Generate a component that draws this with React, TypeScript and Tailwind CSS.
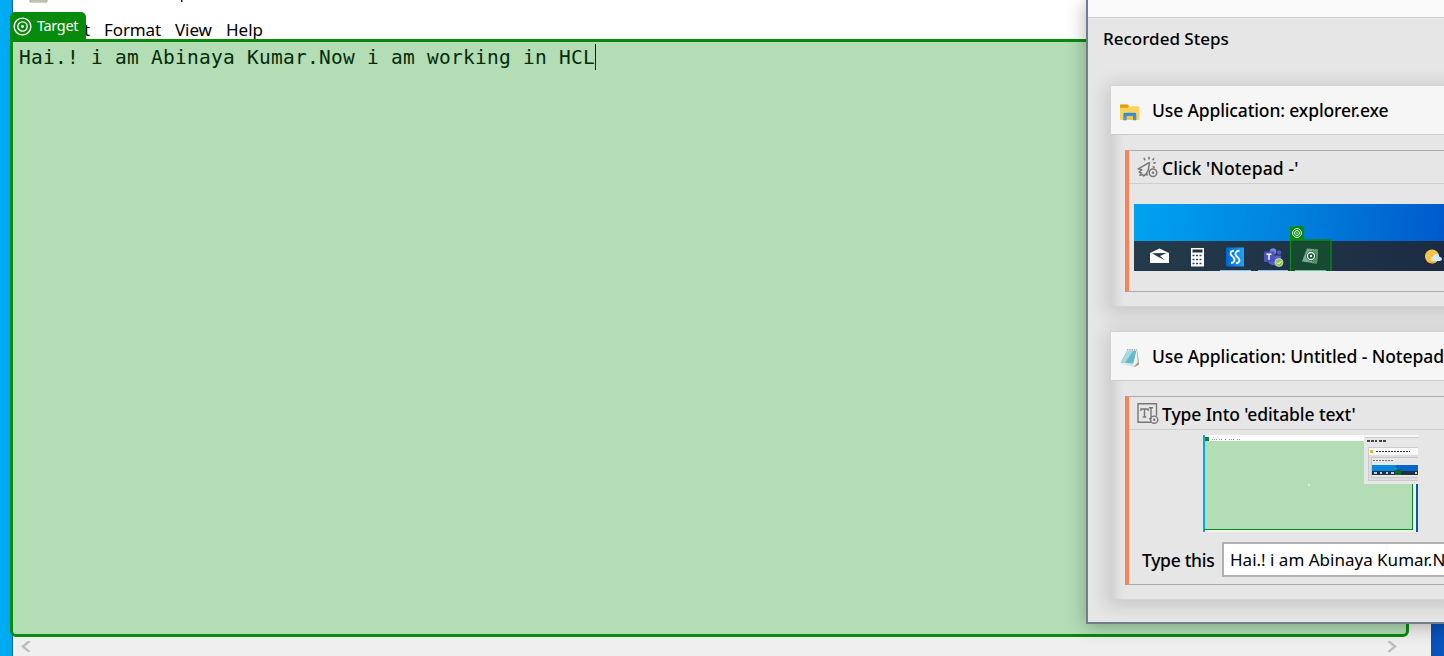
import type { ReactNode } from "react";

const sans = "font-['Noto_Sans','Open_Sans',sans-serif] whitespace-nowrap text-black";

function TargetIcon({ className, stroke = 1.5 }: { className: string; stroke?: number }) {
  return (
    <svg viewBox="0 0 20 20" className={className} fill="none" stroke="white" strokeWidth={stroke}>
      <circle cx="10" cy="10" r="8.8" />
      <circle cx="10" cy="10" r="4.9" />
      <circle cx="10" cy="10" r="1.5" fill="white" stroke="none" />
    </svg>
  );
}

function FolderIcon() {
  return (
    <svg viewBox="0 0 20 17" className="mt-[4px] h-[17px] w-5 shrink-0">
      <path d="M0 1.5Q0 .5 1 .5h6.5L9 2.2h9.500q1 0 1 1V15q0 1-1 1h-17Q0 16 0 15z" fill="#ffd25c" />
      <path d="M1 .5h6.5L9 2 7.500 3.700H0V1.500Q0 .5 1 .5z" fill="#dfa000" />
      <path d="M3.300 16.200v-6q0-1.500 1.500-1.500h10q1.500 0 1.500 1.500v6h-3.500v-4h-6v4z" fill="#4097df" />
      <path d="M4 9h12v2.500H4z" fill="#338bd1" />
      <path d="M6.800 12.200h6V16h-6z" fill="#ffc63b" />
    </svg>
  );
}

function NotepadIcon() {
  return (
    <svg viewBox="0 0 20 20" className="mt-[3px] h-5 w-5 shrink-0">
      <path d="M17.300 2l1.700 14.500-4.500 2.500L12 17z" fill="#aa9270" />
      <path d="M6.700 2.200L17.500 2l-2.700 14.500L0 15.500z" fill="#e3f1f3" />
      <path d="M7 3l9.300-.2-2.800 13L.8 14.500z" fill="#68b8c7" />
      <path d="M7 3l6-.1L5 14.900.8 14.500z" fill="#a6d9e2" />
      <path d="M17 2.500l.8 12-3.800 4-1-2z" fill="#eef2f2" />
      <path d="M0 15.500l11.500 3 3.500-.5-2-2z" fill="#d1e5e8" />
      <path d="M7 1.800h10" stroke="#71858c" strokeDasharray="1.300 1" />
    </svg>
  );
}

function ClickIcon() {
  return (
    <svg viewBox="0 0 21 22" className="h-[22px] w-[21px] shrink-0" fill="none" stroke="#787878" strokeWidth="1.500">
      <path d="M12.500 6.300L1.200 12.800l3.500 1-2.500 2.200 2 .7-1.200 2.500 2.500-.6 1.200 1.300 2.500-2" strokeLinejoin="round" />
      <path d="M12.500 6.300L11.300 14l-2.300 4.500 1.700.8M12 .8v2.700M6.800 2l1.400 2.300M17 2.200l-1.400 2M18.800 6.500l-2.500.8M15.500 10.300l2.300 1.300" />
      <circle cx="16" cy="16.800" r="3.800" />
      <circle cx="16" cy="16.800" r="1.300" fill="#787878" stroke="none" />
    </svg>
  );
}

function TypeIcon() {
  return (
    <svg viewBox="0 0 22 22" className="mt-px h-[22px] w-[22px] shrink-0" fill="none" stroke="#777" strokeWidth="1.400">
      <path d="M14 19.300H1V.8h18.500v12" />
      <path d="M4 8V6h7v2M7.500 6v8M5.800 14h3.500M12 4.700h4M14 4.700v11M12 15.700h2.500" />
      <circle cx="17.200" cy="16.700" r="3.600" />
      <circle cx="17.200" cy="16.700" r="1.200" fill="#777" stroke="none" />
    </svg>
  );
}

function Taskbar() {
  return (
    <svg viewBox="0 0 310 67" className="block h-[67px] w-[310px]">
      <defs>
        <linearGradient id="desk" gradientUnits="userSpaceOnUse" x1="0" y1="0" x2="310" y2="37">
          <stop offset="0" stopColor="#00a3f0" />
          <stop offset=".5" stopColor="#0082de" />
          <stop offset="1" stopColor="#005acb" />
        </linearGradient>
        <linearGradient id="dark">
          <stop offset="0" stopColor="#233b4b" />
          <stop offset="1" stopColor="#1b2c42" />
        </linearGradient>
        <linearGradient id="blueTile">
          <stop offset="0" stopColor="#0065d6" />
          <stop offset="1" stopColor="#20a4f4" />
        </linearGradient>
      </defs>
      <path d="M0 0h310v37H0z" fill="url(#desk)" />
      <path d="M0 37h310v30H0z" fill="url(#dark)" />
      <path d="M86 66.500h31M124 66.500h30" stroke="#83c4f0" />
      <path d="M16 49l9.500-4.500 9.500 4.500v10H16z" fill="#fff" />
      <path d="M18 49.300l14.500-.2-6.500 2.900 5 4.200-7-3.400z" fill="#223848" />
      <path d="M57 44h13v18.500H57z" fill="#fff" />
      <path d="M58.500 45.500h10v3h-10z" fill="#243541" />
      <path d="M58.500 51.500h10M58.500 55.500h10M58.500 59.500h10" stroke="#33434d" strokeWidth="1.700" strokeDasharray="2 1.500" />
      <path d="M92 43.500h18v19H92z" fill="url(#blueTile)" />
      <path d="M100 46.700q-3.500.3-3.500 2.800 0 1.500 1.800 2.800 2.200 1.700 2.200 3.700 0 2.500-3.500 3M102 59.300q3.500-.5 3.500-3 0-1.600-1.700-2.900-2.300-1.600-2.300-3.600 0-2.600 4-3.100" fill="none" stroke="#fff" strokeWidth="1.800" />
      <circle cx="139" cy="47.500" r="3.300" fill="#7b83eb" />
      <circle cx="145" cy="48.500" r="2.200" fill="#5059c9" />
      <path d="M134 51.500h13v4q0 6-5.500 6-6 0-7.500-4z" fill="#5960c5" />
      <rect x="130" y="47.500" width="10.500" height="10.500" rx="1" fill="#4b53bc" />
      <path d="M132.500 50.200h5M135 50.200v5.500" stroke="#fff" strokeWidth="1.500" />
      <circle cx="145" cy="58.500" r="4" fill="#92c353" stroke="#e4efda" strokeWidth=".7" />
      <path d="M143 58.500l1.600 1.600 2.700-3" stroke="#fff" fill="none" />
      <path d="M156.500 36h40.500v32h-40.500z" fill="#174b31" stroke="#078b15" strokeWidth="1.300" />
      <path d="M161 66.500h31" stroke="#6ec29a" />
      <path d="M173 44.500l11 1-1 14-15-2z" fill="#79ac91" />
      <path d="M178 46l6 .5-1 13h-5z" fill="#579071" />
      <g fill="none" stroke="#e7ffed">
        <circle cx="177" cy="52" r="4.500" fill="#124e2c" stroke="#124e2c" strokeWidth=".5" />
        <circle cx="177" cy="52" r="3.500" strokeWidth="1.300" />
        <circle cx="177" cy="52" r="1.200" fill="white" stroke="none" />
      </g>
      <circle cx="298" cy="52.500" r="7" fill="#ffc247" />
      <path d="M293.500 56.800q4 3 8 1" stroke="#ffaa32" strokeWidth="1.500" fill="none" />
      <path d="M297.500 56.500q-1.500-3.500 2-4 .5-3 3.500-2.500 2.500.7 2.500 3 2.500 0 2.500 2 0 1.800-2.500 2h-5.500q-2 0-2.500-.5z" fill="#cdeaff" />
    </svg>
  );
}

function Thumbnail() {
  return (
    <svg viewBox="0 0 215 97" className="h-[97px] w-[215px] shrink-0" shapeRendering="crispEdges">
      <path d="M0 0h215v97H0z" fill="#f2f2f2" />
      <path d="M0 0h162v6H0z" fill="#fff" />
      <path d="M0 0h2v97H0z" fill="#00a8f3" />
      <path d="M2 6h207v88H2z" fill="#b3ddb5" />
      <path d="M209.500 47v47.500H1" stroke="#078b15" fill="none" />
      <path d="M2 2h4v4H2z" fill="#078b15" />
      <path d="M9 4.500h5M16 4.500h3M22 4.500h1M26 4.500h6M34 4.500h4" stroke="#9c9c9c" strokeDasharray="1 1" />
      <path d="M105 49h2v2h-2z" fill="#d8f0d8" />
      <path d="M213 49h2v48h-2z" fill="#0755bd" />
      <path d="M161 0h54v49h-54z" fill="#e7e7e7" />
      <path d="M162 0h53v2h-53z" fill="#fafafa" />
      <path d="M162 2.500h53" stroke="#ccc" />
      <path d="M164 6h10M176 6h7" stroke="#444" strokeWidth="2" strokeDasharray="3 1" />
      <path d="M165 12h50v33h-50z" fill="#ddd" stroke="#ccc" />
      <path d="M166 13h49v7h-49z" fill="#f8f8f8" />
      <path d="M167 15h3v3h-3z" fill="#e9b52b" />
      <path d="M173 16.500h34" stroke="#333" strokeDasharray="2 1" />
      <path d="M168 22h47v20h-47z" fill="#e7e7e7" stroke="#c9c9c9" />
      <path d="M170 25.500h21" stroke="#777" strokeDasharray="2 1" />
      <path d="M169 30h46v6h-46z" fill="#0788df" />
      <path d="M193 30h22v6h-22z" fill="#0765cb" />
      <path d="M169 36h46v4h-46z" fill="#1e3345" />
      <path d="M171 38h3M177 38h2M183 38h2M188 38h3" stroke="#b9cfe5" strokeWidth="2" />
      <path d="M192 35h6v5h-6z" fill="#14652e" />
      <path d="M192 33h2v2h-2z" fill="#21a33d" />
      <path d="M212 37h2v2h-2z" fill="#ffd158" />
    </svg>
  );
}

function Application({ icon, title, children }: { icon: ReactNode; title: ReactNode; children: ReactNode }) {
  return (
    <section className="w-[350px] border border-[#d3d3d3] bg-[#e6e6e6] shadow-[0_3px_18px_3px_rgba(0,0,0,.14)]">
      <header className="flex h-[49px] items-center gap-[12px] border-b border-[#cdcdcd] bg-[#f6f6f6] pl-[9px]">
        {icon}
        {title}
      </header>
      <div className="pt-[15px] pl-[14px] shadow-[inset_14px_0_12px_-10px_rgba(0,0,0,.12)]">{children}</div>
    </section>
  );
}

function Window() {
  return (
    <div className="absolute top-0 left-[12px] flex h-[656px] w-[1419px] flex-col border-l border-[#16658b] bg-white">
      <div className="h-[19px] shrink-0">
        <svg viewBox="0 0 190 5" className="h-[5px] w-[190px]">
          <path d="M17 0h17v2H17z" fill="#dddcd8" stroke="#aaa28c" />
          <path d="M168 0h1.500v2H168z" fill="#222" />
        </svg>
      </div>
      <nav className={`${sans} flex h-[22px] items-center text-[17px]`}>
        <span className="w-[91px] pl-[71px]">t</span>
        <span className="w-[71px] tracking-[-0.1px]">Format</span>
        <span className="w-[51px] tracking-[-0.1px]">View</span>
        <span>Help</span>
      </nav>
      <div className="grow" />
      <div className="flex h-[20px] items-center justify-between bg-[#efefef] pr-[34px] pl-[8px]">
        <svg viewBox="0 0 10 11" className="h-[11px] w-[10px]" fill="none" stroke="#bfbfbf" strokeWidth="2.500">
          <path d="M8.500 0L2 5.500 8.500 11" />
        </svg>
        <svg viewBox="0 0 10 11" className="h-[11px] w-[10px]" fill="none" stroke="#bfbfbf" strokeWidth="2.500">
          <path d="M1.500 0L8 5.500 1.500 11" />
        </svg>
      </div>
    </div>
  );
}

export default function App() {
  return (
    <main className="relative h-[656px] w-[1444px] overflow-hidden bg-[linear-gradient(90deg,#00aef5_0%,#00a5f0_1%,#074fbd_99%,#0856be_100%)]">
      <Window />
      <div className="absolute top-[624px] left-[1400px] h-[32px] w-[31px] bg-[#efefef]" />

      <div className="absolute top-[39px] left-[10px] h-[598px] w-[1399px] rounded-[6px] rounded-tl-none border-[3px] border-[#078b0d] bg-[#b3ddb5] pt-[2px] pl-[6px]">
        <div className="inline-block border-r border-[#052c08] pt-px font-['DejaVu_Sans_Mono',monospace] text-[19.500px] leading-[25px] tracking-[0.261px] whitespace-pre text-[#052c08]">
          Hai.! i am Abinaya Kumar.Now i am working in HCL
        </div>
      </div>
      <div className="absolute top-[12px] left-[10px] flex h-[28px] w-[76px] items-center gap-[5px] rounded-t-[5px] bg-[#078b0d] pl-[3px]">
        <TargetIcon className="h-[19px] w-[19px] shrink-0" />
        <span className="mb-[2px] font-['Noto_Sans',sans-serif] text-[14.500px] leading-5 tracking-[-0.35px] text-white">Target</span>
      </div>

      <aside className="absolute top-0 left-[1086px] h-[624px] w-[380px] overflow-hidden border-b-2 border-l-2 border-[#707d8a] bg-[#e6e6e6] shadow-[0_2px_18px_rgba(0,0,0,.3)]">
        <div className="h-[18px] border-b border-[#d1d1d1] bg-[#fafafa]" />
        <h1 className={`${sans} h-[67px] pt-[9px] pl-[15px] text-[17px] leading-6 font-medium`}>Recorded Steps</h1>
        <div className="flex flex-col gap-[24px] pl-[22px]">
          <Application
            icon={<FolderIcon />}
            title={<h2 className={`${sans} text-[17.500px] font-medium tracking-[-0.140px]`}>Use Application: explorer.exe</h2>}
          >
            <div className="h-[156px]">
              <div className="h-[142px] border-y border-l-4 border-y-[#aaaaaa] border-l-[#ff8052]">
                <div className="flex h-[33px] items-center gap-[4px] border-b border-[#cfcfcf] pl-[8px]">
                  <ClickIcon />
                  <h3 className={`${sans} mt-[2px] text-[17.500px] font-medium tracking-[0.1px]`}>Click 'Notepad -'</h3>
                </div>
                <div className="pt-[20px] pl-[5px]">
                  <div className="relative">
                    <Taskbar />
                    <div className="absolute top-[22px] left-[156px] flex h-[14px] w-[14px] items-center justify-center rounded-t-[2px] bg-[#078b15]">
                      <TargetIcon className="h-[10px] w-[10px]" stroke={1.8} />
                    </div>
                  </div>
                </div>
              </div>
            </div>
          </Application>
          <Application
            icon={<NotepadIcon />}
            title={<h2 className={`${sans} mt-px text-[17.500px] font-medium tracking-[-0.080px]`}>Use Application: Untitled - Notepad</h2>}
          >
            <div className="h-[203px]">
              <div className="h-[189px] border-y border-l-4 border-y-[#aaaaaa] border-l-[#ff8052]">
                <div className="flex h-[33px] items-center gap-[3px] border-b border-[#cfcfcf] pl-[8px]">
                  <TypeIcon />
                  <h3 className={`${sans} mt-[2px] text-[17.500px] font-medium tracking-[-0.1px]`}>Type Into 'editable text'</h3>
                </div>
                <div className="flex h-[112px] pt-[5px] pl-[74px]">
                  <Thumbnail />
                </div>
                <div className="flex items-center pl-[13px]">
                  <label className={`${sans} mt-[2px] w-[80px] shrink-0 text-[17.500px] font-medium tracking-[-0.3px]`}>Type this</label>
                  <div className={`${sans} flex h-[35px] w-[250px] shrink-0 items-center border-2 border-[#b1b1b1] bg-white pl-[6px] text-[17px] tracking-[0px]`}>
                    Hai.! i am Abinaya Kumar.N
                  </div>
                </div>
              </div>
            </div>
          </Application>
        </div>
      </aside>
    </main>
  );
}
